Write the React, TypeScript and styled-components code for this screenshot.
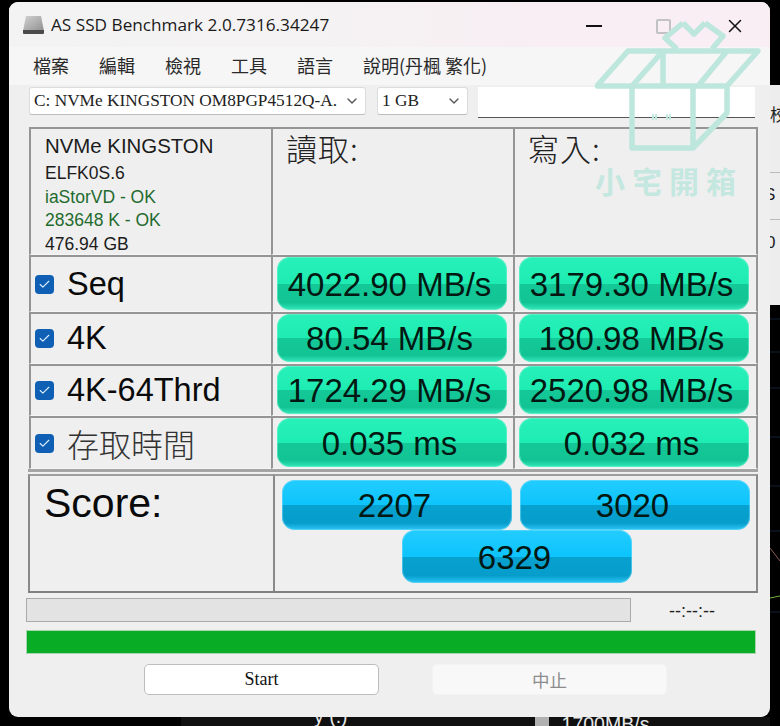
import styled, { createGlobalStyle } from 'styled-components'
import { Check, ChevronDown, X } from 'lucide-react'

const GlobalStyle = createGlobalStyle`
  html, body {
    margin: 0;
    padding: 0;
    background: #000;
  }
  * {
    box-sizing: border-box;
  }
`

const CJK = `"Noto Sans CJK TC", "Noto Sans", sans-serif`
const SANS = `"Liberation Sans", Arial, "Noto Sans CJK TC", sans-serif`
const SERIF = `"Liberation Serif", "Noto Sans CJK TC", serif`

const Desktop = styled.div`
  width: 780px;
  height: 726px;
  overflow: hidden;
  background: #000;
  display: grid;
  grid-template-columns: 9px 761px 10px;
  grid-template-rows: 2px 715px 9px;
`
const Window = styled.main`
  grid-area: 2 / 2 / 3 / 3;
  position: relative;
  background: #efefef;
  border-radius: 9px;
  overflow: hidden;
  color: #000;
`
const TitleBar = styled.header`
  height: 45px;
  display: flex;
  align-items: center;
  padding-left: 13px;
  background: linear-gradient(90deg, #f3f3f3 0%, #f5f2f3 45%, #f8eef3 70%, #f8eef3 100%);
`
const Title = styled.span`
  font-family: "Open Sans", sans-serif;
  font-size: 17.2px;
  margin-left: 6px;
  color: #1a1a1a;
`
const WindowButtons = styled.div`
  position: absolute;
  top: 13px;
  left: 577px;
  display: flex;
  align-items: center;
`
const MinimizeBar = styled.span`
  width: 16px;
  height: 2px;
  background: #111;
`
const MaximizeBox = styled.span`
  width: 15px;
  height: 15px;
  margin-left: 54px;
  border: 2px solid #c2c2c2;
  border-radius: 2px;
`
const CloseIcon = styled(X)`
  width: 22px;
  height: 22px;
  margin-left: 53px;
  color: #111;
`
const MenuBar = styled.nav`
  height: 38px;
  display: flex;
  align-items: center;
  gap: 30px;
  padding: 0 0 2px 24px;
  background: #f6f6f6;
  font-family: ${CJK};
  font-size: 18px;
  color: #2a2a2a;
`
const Toolbar = styled.div`
  display: flex;
  align-items: flex-start;
  padding: 2px 0 0 20px;
`
const Select = styled.div<{ $width: number; $gap: number }>`
  width: ${({ $width }) => $width}px;
  margin-right: ${({ $gap }) => $gap}px;
  height: 28px;
  display: flex;
  align-items: center;
  justify-content: space-between;
  padding: 0 5px 0 4px;
  background: #fff;
  border: 1px solid #dcdcdc;
  border-bottom-color: #bdbdbd;
  border-radius: 3px;
  font-family: ${SERIF};
  font-size: 17.3px;
  white-space: nowrap;
  overflow: hidden;
  color: #222;
`
const Chevron = styled(ChevronDown)`
  width: 16px;
  height: 16px;
  flex: none;
  color: #555;
`
const TextBox = styled.div`
  width: 277px;
  height: 31px;
  background: #fff;
  border-bottom: 1px solid #555;
`
const Table = styled.section`
  margin: 9px 0 0 20px;
  width: 729px;
  display: grid;
  grid-template-columns: 242px 242px 245px;
  grid-template-rows: 128px 57px 52px 52px 53px;
  row-gap: 0;
`
const Cell = styled.div<{ $last?: boolean }>`
  border-top: 2px solid #959595;
  border-left: 2px solid #959595;
  border-bottom: 1px solid #f6f6f6;
  ${({ $last }) => $last && 'border-right: 2px solid #959595;'}
`
const DriveCell = styled(Cell)`
  padding: 4px 0 0 14px;
  font-family: ${SANS};
  font-size: 17.5px;
  line-height: 23.5px;
  color: #1b1b1b;
`
const DriveName = styled.div`
  font-size: 20.4px;
  line-height: 27px;
  margin-bottom: 2px;
`
const DriveOk = styled.div`
  color: #1f6b2e;
`
const HeadCell = styled(Cell)`
  padding: 0 0 0 13px;
  font-family: ${CJK};
  font-weight: 300;
  font-size: 31px;
  line-height: 38px;
  letter-spacing: 1px;
  color: #222;
`
const LabelCell = styled(Cell)`
  display: flex;
  align-items: center;
  padding-left: 4px;
  font-family: ${SANS};
  font-size: 32.5px;
  color: #0a0a0a;
`
const CheckBox = styled.span`
  width: 19px;
  height: 19px;
  margin-right: 13px;
  display: flex;
  align-items: center;
  justify-content: center;
  flex: none;
  border-radius: 4px;
  background: #0f5fb5;
  color: #dff0ff;
`
const CjkLabel = styled.span`
  font-family: ${CJK};
  font-weight: 300;
  font-size: 32px;
  color: #333;
`
const ValueCell = styled(Cell)`
  padding: 0 0 1px 4px;
  display: flex;
`
const Pill = styled.div<{ $tone: 'green' | 'blue' }>`
  width: 230px;
  height: 100%;
  padding: 2px 5px 0 0;
  display: flex;
  align-items: center;
  justify-content: center;
  border-radius: 13px;
  font-family: ${SANS};
  font-size: 33px;
  color: #031812;
  background: ${({ $tone }) =>
    $tone === 'green'
      ? 'linear-gradient(180deg, #28f0ba 0%, #1eecb2 50%, #14c898 51%, #12c494 86%, #34e8bb 100%)'
      : 'linear-gradient(180deg, #22ccff 0%, #0dc4fc 50%, #07a1d0 51%, #069dcb 86%, #2cc6f6 100%)'};
  box-shadow: inset 0 0 0 1px
    ${({ $tone }) => ($tone === 'green' ? 'rgba(120, 245, 210, 0.55)' : 'rgba(120, 220, 250, 0.55)')};
`
const Divider = styled.div`
  width: 730px;
  height: 3px;
  margin-left: 19px;
  background: #a4a4a4;
`
const ScoreGrid = styled.section`
  margin: 2px 0 0 19px;
  width: 730px;
  height: 119px;
  display: grid;
  grid-template-columns: 245px 485px;
  border-bottom: 2px solid #808080;
`
const ScoreLabel = styled.div`
  border-top: 2px solid #9d9d9d;
  border-left: 2px solid #8a8a8a;
  padding: 0 0 0 14px;
  font-family: ${SANS};
  font-size: 41px;
  line-height: 54px;
  color: #0a0a0a;
`
const ScoreValues = styled.div`
  border-top: 2px solid #9d9d9d;
  border-left: 2px solid #8a8a8a;
  border-right: 2px solid #8a8a8a;
  padding: 4px 5px 0 7px;
  display: grid;
  grid-template-columns: 229px 229px;
  grid-template-rows: 50px 53px;
  column-gap: 9px;
`
const TotalPill = styled(Pill)`
  grid-column: 1 / 3;
  justify-self: center;
  margin-left: 3px;
`
const ProgressRow = styled.div`
  display: flex;
  align-items: center;
  margin: 5px 0 0 17px;
`
const ProgressTrack = styled.div`
  width: 605px;
  height: 24px;
  background: #e3e3e3;
  border: 1px solid #aaa;
`
const TimeText = styled.span`
  width: 122px;
  margin-top: 2px;
  text-align: center;
  font-family: ${SANS};
  font-size: 18px;
  color: #222;
`
const GreenBar = styled.div`
  width: 730px;
  height: 24px;
  margin: 8px 0 0 17px;
  background: #08ad25;
  border: 1px solid #a9d4b0;
`
const Actions = styled.div`
  display: flex;
  margin: 10px 0 0 135px;
  gap: 53px;
`
const ActionButton = styled.button<{ $disabled?: boolean }>`
  width: 235px;
  height: 31px;
  padding: 0;
  border-radius: 5px;
  font-family: ${({ $disabled }) => ($disabled ? CJK : SERIF)};
  font-size: ${({ $disabled }) => ($disabled ? '17.5px' : '18px')};
  color: ${({ $disabled }) => ($disabled ? '#8c8c8c' : '#111')};
  background: ${({ $disabled }) => ($disabled ? '#f8f8f8' : '#fff')};
  border: 1px solid ${({ $disabled }) => ($disabled ? '#f3f3f3' : '#bdbdbd')};
`
const Watermark = styled.div`
  position: absolute;
  top: 18px;
  left: 586px;
  width: 166px;
  display: flex;
  flex-direction: column;
  align-items: flex-start;
  pointer-events: none;
`
const WatermarkText = styled.span`
  margin-top: 2px;
  font-family: ${CJK};
  font-weight: 700;
  font-size: 30px;
  line-height: 36px;
  letter-spacing: 7px;
  white-space: nowrap;
  color: #c4e7df;
`
const RightEdge = styled.aside`
  grid-area: 1 / 3 / 4 / 4;
  display: flex;
  flex-direction: column;
  background: #000;
  overflow: hidden;
  padding-top: 85px;
`
const EdgePanel = styled.div`
  height: 220px;
  flex: none;
  background: #ededed;
  display: grid;
  grid-template-rows: 88px 47px 1fr;
  font-family: ${SANS};
  font-size: 17px;
  color: #222;
`
const EdgeRow = styled.div<{ $top?: number }>`
  display: flex;
  align-items: flex-start;
  padding-top: ${({ $top }) => $top ?? 0}px;
  border-bottom: 1px solid #bbb;
`
const EdgeLast = styled.div`
  display: flex;
  padding-top: 13px;
`
const EdgeClipped = styled.span<{ $shift: number }>`
  margin-left: ${({ $shift }) => $shift}px;
`
const BottomEdge = styled.footer`
  grid-area: 3 / 2 / 4 / 3;
  display: flex;
  align-items: flex-start;
  overflow: hidden;
  background: linear-gradient(90deg, #000 0, #000 172px, #101010 172px);
  font-family: ${SANS};
  font-size: 19.5px;
  line-height: 16px;
  color: #e8e8e8;
`
const BottomText = styled.span<{ $left: number; $top: number }>`
  margin: ${({ $top }) => $top}px 0 0 ${({ $left }) => $left}px;
  white-space: nowrap;
`
const GreyTick = styled.span`
  width: 14px;
  height: 9px;
  margin-left: 187px;
  background: #b0b0b0;
`

const rows = [
  { label: 'Seq', read: '4022.90 MB/s', write: '3179.30 MB/s' },
  { label: '4K', read: '80.54 MB/s', write: '180.98 MB/s' },
  { label: '4K-64Thrd', read: '1724.29 MB/s', write: '2520.98 MB/s' },
  { label: '存取時間', read: '0.035 ms', write: '0.032 ms', cjk: true },
]

const menus = ['檔案', '編輯', '檢視', '工具', '語言', '說明(丹楓 繁化)']

const DriveIcon = () => (
  <svg width="23" height="20" viewBox="0 0 23 20">
    <defs>
      <linearGradient id="drive" x1="0" y1="0" x2="1" y2="1">
        <stop offset="0" stopColor="#d2d2d2" />
        <stop offset="1" stopColor="#8f8f8f" />
      </linearGradient>
    </defs>
    <path d="M4 1h15l3 15H1z" fill="url(#drive)" />
    <path d="M1 15h21v3a1 1 0 0 1-1 1H2a1 1 0 0 1-1-1z" fill="#4b4b4b" />
  </svg>
)

const BoxLogo = () => (
  <svg width="166" height="140" viewBox="0 0 166 140" fill="none" stroke="#bde6dc" strokeWidth="5.5" strokeLinejoin="round">
    <path d="M88 3 L70 18 L82 29 M110 3 L128 16 L117 29 M88 3 L99 14 L110 3" />
    <path d="M33 31 H163 L132 66 H2 Z" />
    <path d="M68 31 V66 M68 31 L37 66 M132 31 L103 66" />
    <path d="M37 66 V128 H98 V66 M98 128 L132 93 V66" />
    <path d="M57 97 H62 M71 97 H76" strokeDasharray="2 1" />
  </svg>
)

// dim chart that shows beside the window
const EdgeChart = () => (
  <svg width="10" height="421" viewBox="0 0 10 421" fill="none">
    <path d="M0 14H10M0 47H10M0 83H10M0 132H10M0 181H10M0 226H10M0 307H10" stroke="#123" />
    <path d="M0 243L10 256" stroke="#8a5a55" />
    <path d="M0 293L10 291" stroke="#6fae3c" />
  </svg>
)

export default function App() {
  return (
    <>
      <GlobalStyle />
      <Desktop>
        <Window>
          <TitleBar>
            <DriveIcon />
            <Title>AS SSD Benchmark 2.0.7316.34247</Title>
          </TitleBar>
          <WindowButtons>
            <MinimizeBar />
            <MaximizeBox />
            <CloseIcon strokeWidth={1.6} />
          </WindowButtons>
          <MenuBar>
            {menus.map((menu) => (
              <span key={menu}>{menu}</span>
            ))}
          </MenuBar>
          <Toolbar>
            <Select $width={337} $gap={11}>
              C: NVMe KINGSTON OM8PGP4512Q-A.
              <Chevron />
            </Select>
            <Select $width={91} $gap={10}>
              1 GB
              <Chevron />
            </Select>
            <TextBox />
          </Toolbar>
          <Table>
            <DriveCell>
              <DriveName>NVMe KINGSTON</DriveName>
              <div>ELFK0S.6</div>
              <DriveOk>iaStorVD - OK</DriveOk>
              <DriveOk>283648 K - OK</DriveOk>
              <div>476.94 GB</div>
            </DriveCell>
            <HeadCell>讀取:</HeadCell>
            <HeadCell $last>寫入:</HeadCell>
            {rows.map((row) => (
              <Row key={row.label} {...row} />
            ))}
          </Table>
          <Divider />
          <ScoreGrid>
            <ScoreLabel>Score:</ScoreLabel>
            <ScoreValues>
              <Pill $tone="blue">2207</Pill>
              <Pill $tone="blue">3020</Pill>
              <TotalPill $tone="blue">6329</TotalPill>
            </ScoreValues>
          </ScoreGrid>
          <ProgressRow>
            <ProgressTrack />
            <TimeText>--:--:--</TimeText>
          </ProgressRow>
          <GreenBar />
          <Actions>
            <ActionButton>Start</ActionButton>
            <ActionButton $disabled>中止</ActionButton>
          </Actions>
          <Watermark>
            <BoxLogo />
            <WatermarkText>小宅開箱</WatermarkText>
          </Watermark>
        </Window>
        <RightEdge>
          <EdgePanel>
            <EdgeRow $top={16}>
              <EdgeClipped $shift={0}>校</EdgeClipped>
            </EdgeRow>
            <EdgeRow $top={12}>
              <EdgeClipped $shift={-6}>S</EdgeClipped>
            </EdgeRow>
            <EdgeLast>
              <EdgeClipped $shift={-4}>0</EdgeClipped>
            </EdgeLast>
          </EdgePanel>
          <EdgeChart />
        </RightEdge>
        <BottomEdge>
          <BottomText $left={305} $top={-9}>y (.)</BottomText>
          <GreyTick />
          <BottomText $left={13} $top={-1}>1700MB/s</BottomText>
        </BottomEdge>
      </Desktop>
    </>
  )
}

const Row = ({ label, read, write, cjk }: { label: string; read: string; write: string; cjk?: boolean }) => (
  <>
    <LabelCell>
      <CheckBox>
        <Check size={13} strokeWidth={2} />
      </CheckBox>
      {cjk ? <CjkLabel>{label}</CjkLabel> : label}
    </LabelCell>
    <ValueCell>
      <Pill $tone="green">{read}</Pill>
    </ValueCell>
    <ValueCell $last>
      <Pill $tone="green">{write}</Pill>
    </ValueCell>
  </>
)
